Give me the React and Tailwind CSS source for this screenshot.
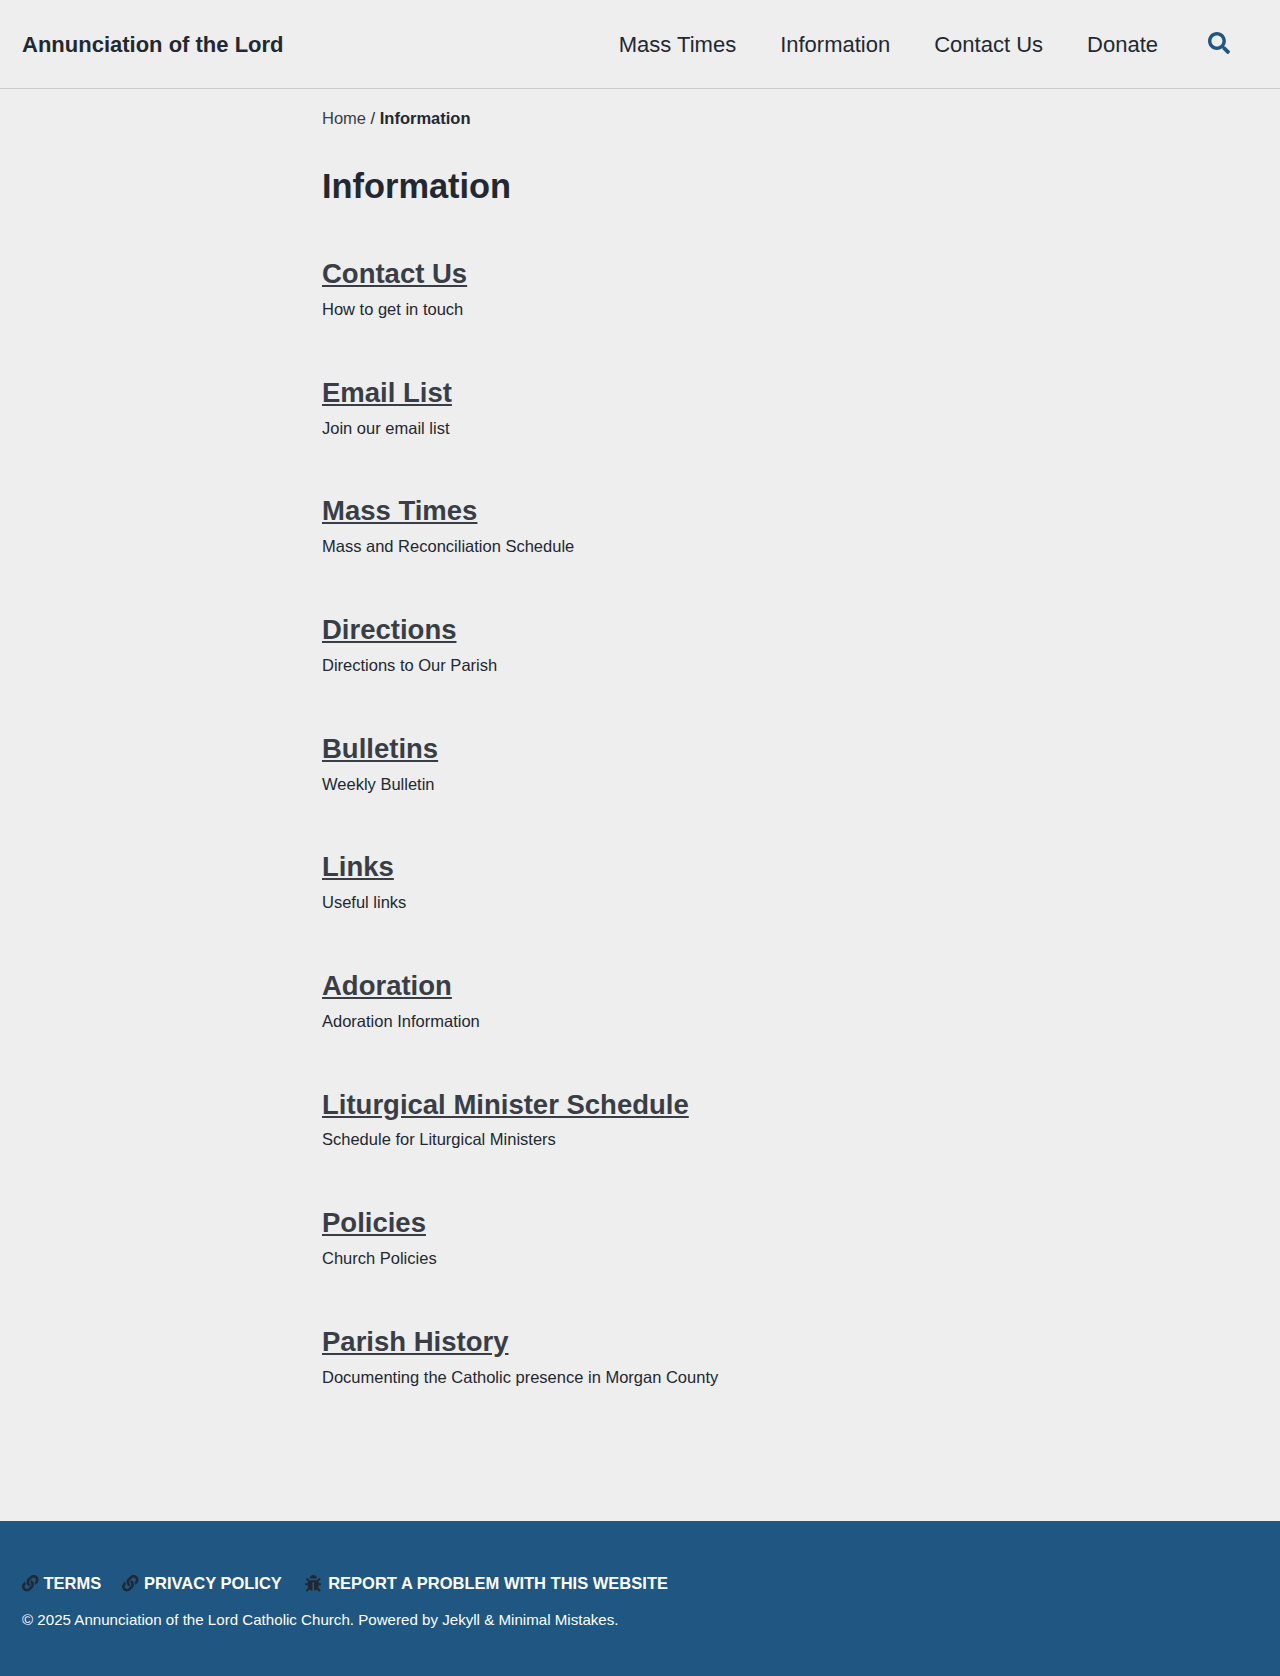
import { FaSearch, FaLink, FaBug } from "react-icons/fa";

const NAV = ["Mass Times", "Information", "Contact Us", "Donate"];

const ITEMS = [
  ["Contact Us", "How to get in touch"],
  ["Email List", "Join our email list"],
  ["Mass Times", "Mass and Reconciliation Schedule"],
  ["Directions", "Directions to Our Parish"],
  ["Bulletins", "Weekly Bulletin"],
  ["Links", "Useful links"],
  ["Adoration", "Adoration Information"],
  ["Liturgical Minister Schedule", "Schedule for Liturgical Ministers"],
  ["Policies", "Church Policies"],
  ["Parish History", "Documenting the Catholic presence in Morgan County"],
];

export default function App() {
  return (
    <div className="flex h-[1676px] flex-col bg-[#eeeeee] font-['Liberation_Sans',Arial,sans-serif] text-[#222831]">
      <header className="flex h-[89px] shrink-0 items-center border-b border-[#cbcccd] pr-[50px] pl-[22px] text-[22px]">
        <a className="font-bold">Annunciation of the Lord</a>
        <nav className="ml-auto flex gap-[44px]">
          {NAV.map((label) => (
            <a key={label}>{label}</a>
          ))}
        </nav>
        <button className="ml-[50px] text-[#1f5682]" aria-label="Search">
          <FaSearch className="mb-[2px] size-[22px]" />
        </button>
      </header>
      <main className="grow pl-[322px]">
        <nav className="mt-[17px] text-[16.5px] leading-[25px]">
          <a className="text-[#393e46]">Home</a> / <b>Information</b>
        </nav>
        <h1 className="mt-[35px] text-[34.4px] leading-[41px] font-bold">Information</h1>
        <div className="mt-[50px]">
          {ITEMS.map(([title, text]) => (
            <article key={title} className="h-[118.657px]">
              <h2 className="text-[27.5px] leading-[33px] font-bold text-[#393e46] underline">{title}</h2>
              <p className="mt-[6.891px] text-[16.5px] leading-[25px]">{text}</p>
            </article>
          ))}
        </div>
      </main>
      <footer className="h-[155px] shrink-0 bg-[#1f5682] px-[22px] pt-[50px] text-white">
        <ul className="flex text-[16.5px] leading-[25px] font-bold">
          <li className="flex items-center"><FaLink className="mr-[5px] size-[16.5px] text-[#222831]" />TERMS</li>
          <li className="ml-[21px] flex items-center"><FaLink className="mr-[5.3px] size-[16.5px] text-[#222831]" />PRIVACY POLICY</li>
          <li className="ml-[22.8px] flex items-center"><FaBug className="mr-[7px] size-[16.5px] text-[#222831]" />REPORT A PROBLEM WITH THIS WEBSITE</li>
        </ul>
        <p className="mt-[12px] text-[15.125px] leading-[23px]">© 2025 Annunciation of the Lord Catholic Church. Powered by Jekyll &amp; Minimal Mistakes.</p>
      </footer>
    </div>
  );
}
